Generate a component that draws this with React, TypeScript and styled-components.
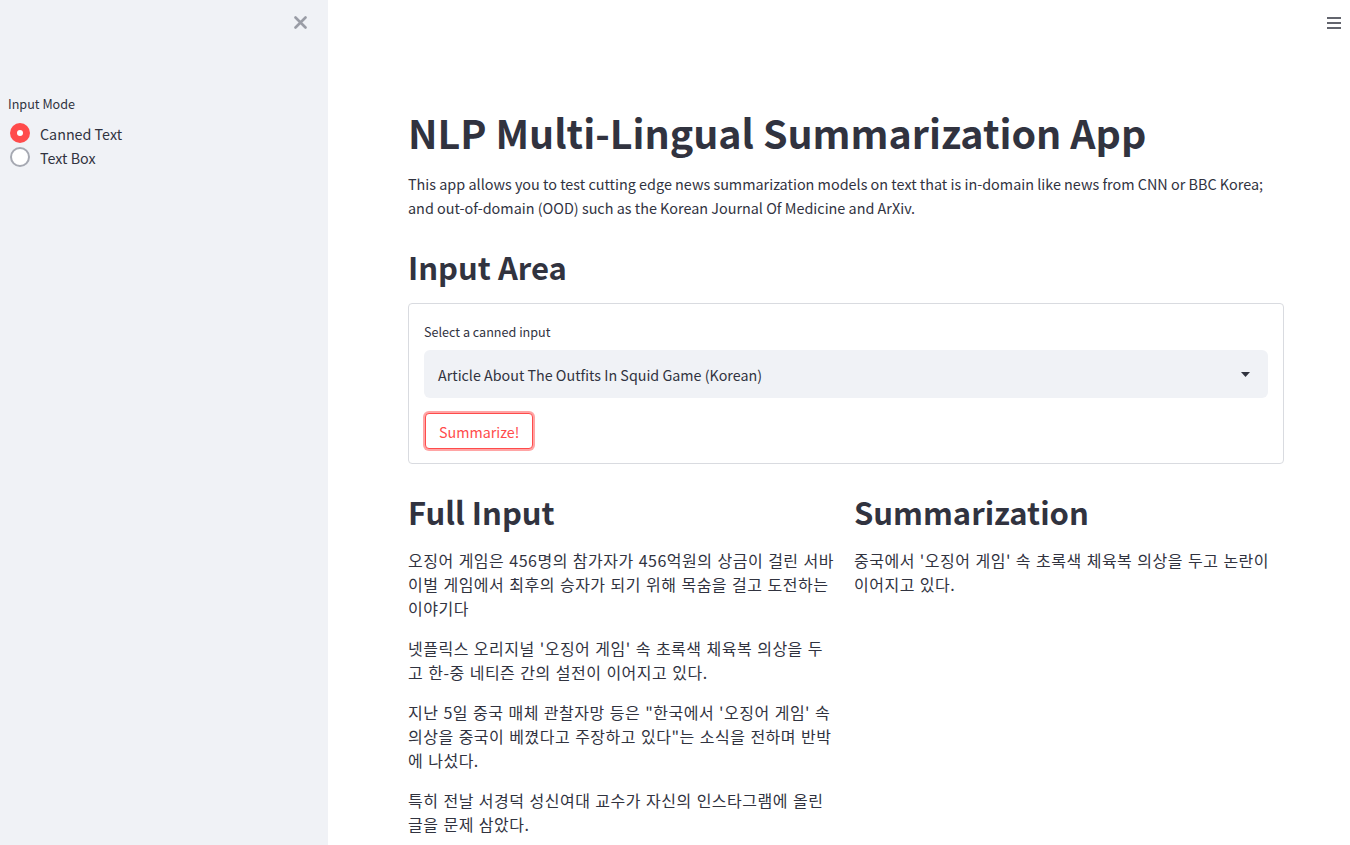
import React from "react";
import styled, { createGlobalStyle } from "styled-components";

const Global = createGlobalStyle`
  html, body { margin: 0; padding: 0; background: #ffffff; }
  body {
    font-family: "Noto Sans CJK KR", "Source Sans Pro", Lato, sans-serif;
    color: #31333f;
    -webkit-font-smoothing: antialiased;
  }
  * { box-sizing: border-box; }
`;

const Shell = styled.div`
  display: flex;
  width: 1350px;
  height: 845px;
  overflow: hidden;
`;

const Sidebar = styled.aside`
  width: 328px;
  flex: 0 0 328px;
  background: #f0f2f6;
  display: flex;
  flex-direction: column;
  padding: 16px 0 0 8px;
`;

const SidebarTop = styled.div`
  display: flex;
  justify-content: flex-end;
  padding-right: 21px;
  height: 18px;
  color: #9a9da6;
`;

const Field = styled.div`
  margin-top: 62px;
  display: flex;
  flex-direction: column;
`;

const Label = styled.div`
  font-size: 12.6px;
  line-height: 16px;
  color: #31333f;
  margin-bottom: 9px;
`;

const RadioRow = styled.div`
  display: flex;
  align-items: center;
  gap: 10px;
  height: 24px;
  font-size: 14.3px;
  color: #31333f;
  padding-left: 2px;
`;

const RadioDot = styled.span<{ $on?: boolean }>`
  width: 20px;
  height: 20px;
  border-radius: 50%;
  display: inline-flex;
  align-items: center;
  justify-content: center;
  background: ${(p) => (p.$on ? "#ff4b4b" : "#ffffff")};
  border: ${(p) => (p.$on ? "none" : "2px solid #a6a9b2")};
  &::after {
    content: "";
    width: 6px;
    height: 6px;
    border-radius: 50%;
    background: #ffffff;
    display: ${(p) => (p.$on ? "block" : "none")};
  }
`;

const Main = styled.main`
  flex: 1;
  display: flex;
  flex-direction: column;
  min-width: 0;
`;

const Header = styled.header`
  display: flex;
  justify-content: flex-end;
  padding: 16px 9px 0 0;
  height: 48px;
`;

const Content = styled.div`
  width: 876px;
  margin-left: 80px;
  display: flex;
  flex-direction: column;
`;

const Title = styled.h1`
  margin: 56px 0 0;
  font-size: 39.4px;
  font-weight: 700;
  line-height: 56px;
  color: #31333f;
`;

const Para = styled.p`
  margin: 12px 0 0;
  font-size: 14.4px;
  line-height: 24px;
  color: #31333f;
`;

const H2 = styled.h2<{ $top?: number }>`
  margin: ${(p) => p.$top ?? 0}px 0 0;
  font-size: 31px;
  font-weight: 700;
  line-height: 44px;
  color: #31333f;
`;

const Box = styled.div`
  margin-top: 14px;
  border: 1px solid #d9dbe0;
  border-radius: 4px;
  padding: 19px 15px 14px;
  display: flex;
  flex-direction: column;
`;

const SmallLabel = styled.div`
  font-size: 12.6px;
  line-height: 17px;
  color: #31333f;
  margin-bottom: 10px;
`;

const Select = styled.div`
  height: 48px;
  background: #f0f2f6;
  border-radius: 6px;
  display: flex;
  align-items: center;
  justify-content: space-between;
  padding: 0 18px 0 14px;
  font-size: 14.3px;
  color: #31333f;
`;

const Button = styled.button`
  margin-top: 15px;
  margin-left: 1px;
  align-self: flex-start;
  height: 36px;
  padding: 0 13px;
  background: #ffffff;
  border: 1px solid #ff4b4b;
  border-radius: 4px;
  box-shadow: 0 0 0 2px rgba(255, 75, 75, 0.5);
  color: #ff4b4b;
  font-family: inherit;
  font-size: 14.3px;
`;

const Columns = styled.div`
  display: grid;
  grid-template-columns: 430px 430px;
  column-gap: 16px;
  margin-top: 26px;
`;

const Col = styled.div`
  display: flex;
  flex-direction: column;
`;

const KoText = styled.p`
  margin: 14px 0 4px;
  font-size: 16px;
  line-height: 24px;
  letter-spacing: 0.5px;
  word-spacing: 0.9px;
  white-space: nowrap;
  color: #31333f;
  & + & { margin-top: 12px; }
`;

const Lines = ({ lines }: { lines: string[] }) => (
  <KoText>
    {lines.map((l, i) => (
      <React.Fragment key={i}>
        {i > 0 && <br />}
        {l}
      </React.Fragment>
    ))}
  </KoText>
);

const Caret = () => (
  <svg width="9" height="5" viewBox="0 0 9 5">
    <path d="M0 0h9L4.5 5z" fill="#31333f" />
  </svg>
);

const Close = () => (
  <svg width="13" height="13" viewBox="0 0 13 13">
    <path d="M1.5 1.5l10 10M11.5 1.5l-10 10" stroke="currentColor" strokeWidth="2.6" strokeLinecap="round" />
  </svg>
);

const Burger = () => (
  <svg width="14" height="14" viewBox="0 0 14 14">
    <path d="M0 2h14M0 7h14M0 12h14" stroke="#31333f" strokeWidth="1.6" />
  </svg>
);

const fullInput: string[][] = [
  ["오징어 게임은 456명의 참가자가 456억원의 상금이 걸린 서바", "이벌 게임에서 최후의 승자가 되기 위해 목숨을 걸고 도전하는", "이야기다"],
  ["넷플릭스 오리지널 '오징어 게임' 속 초록색 체육복 의상을 두", "고 한-중 네티즌 간의 설전이 이어지고 있다."],
  ["지난 5일 중국 매체 관찰자망 등은 \"한국에서 '오징어 게임' 속", "의상을 중국이 베꼈다고 주장하고 있다\"는 소식을 전하며 반박", "에 나섰다."],
  ["특히 전날 서경덕 성신여대 교수가 자신의 인스타그램에 올린", "글을 문제 삼았다."],
];

const summary: string[] = ["중국에서 '오징어 게임' 속 초록색 체육복 의상을 두고 논란이", "이어지고 있다."];

export default function App() {
  return (
    <>
      <Global />
      <Shell>
        <Sidebar>
          <SidebarTop>
            <Close />
          </SidebarTop>
          <Field>
            <Label>Input Mode</Label>
            <RadioRow>
              <RadioDot $on />
              Canned Text
            </RadioRow>
            <RadioRow>
              <RadioDot />
              Text Box
            </RadioRow>
          </Field>
        </Sidebar>
        <Main>
          <Header>
            <Burger />
          </Header>
          <Content>
            <Title>NLP Multi-Lingual Summarization App</Title>
            <Para>
              This app allows you to test cutting edge news summarization models on text that is in-domain like news from CNN or BBC Korea;
              and out-of-domain (OOD) such as the Korean Journal Of Medicine and ArXiv.
            </Para>
            <H2 $top={25}>Input Area</H2>
            <Box>
              <SmallLabel>Select a canned input</SmallLabel>
              <Select>
                <span>Article About The Outfits In Squid Game (Korean)</span>
                <Caret />
              </Select>
              <Button>Summarize!</Button>
            </Box>
            <Columns>
              <Col>
                <H2>Full Input</H2>
                {fullInput.map((p, i) => (
                  <Lines key={i} lines={p} />
                ))}
              </Col>
              <Col>
                <H2>Summarization</H2>
                <Lines lines={summary} />
              </Col>
            </Columns>
          </Content>
        </Main>
      </Shell>
    </>
  );
}
